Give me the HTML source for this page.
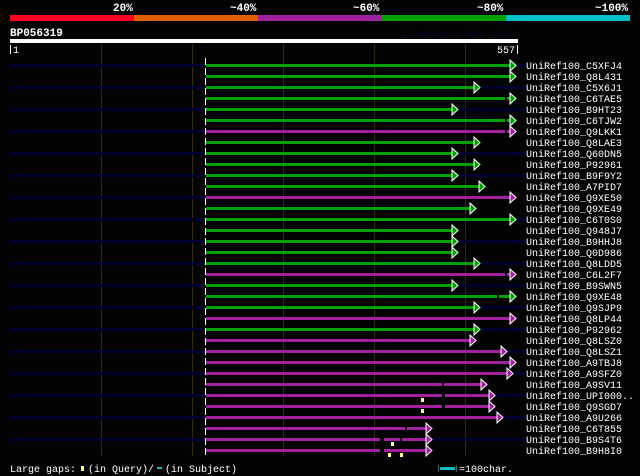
<!DOCTYPE html>
<html><head><meta charset="utf-8"><style>
html,body{margin:0;padding:0;background:#000;}
svg{display:block}
text{font-family:"Liberation Mono","DejaVu Sans Mono",monospace;}
</style></head><body>
<svg width="640" height="476" xmlns="http://www.w3.org/2000/svg">
<rect width="640" height="476" fill="#030303"/>
<g fill="#fff" font-size="11" font-weight="bold">
<text x="113" y="11">20%</text><text x="230" y="11">~40%</text><text x="353" y="11">~60%</text><text x="477" y="11">~80%</text><text x="595" y="11">~100%</text>
</g>
<rect x="10" y="15" width="124" height="6" fill="#ff0022"/>
<rect x="134" y="15" width="124" height="6" fill="#e06000"/>
<rect x="258" y="15" width="124" height="6" fill="#a020a0"/>
<rect x="382" y="15" width="124" height="6" fill="#00a000"/>
<rect x="506" y="15" width="124" height="6" fill="#00c0c8"/>
<text x="10" y="36" fill="#fff" font-size="11" font-weight="bold">BP056319</text>
<text x="402" y="37" fill="#080830" font-size="8">AlignView.pm Beta rel.7</text>
<rect x="10" y="39" width="508" height="4" fill="#fff"/>
<rect x="10" y="45" width="1" height="9" fill="#fff"/>
<text x="13" y="53" fill="#fff" font-size="10">1</text>
<text x="497" y="53" fill="#fff" font-size="10">557</text>
<rect x="517" y="45" width="1" height="9" fill="#fff"/>
<g fill="#2e2e0c">
<rect x="101" y="44" width="1" height="412"/><rect x="192" y="44" width="1" height="412"/><rect x="283" y="44" width="1" height="412"/><rect x="374" y="44" width="1" height="412"/><rect x="465" y="44" width="1" height="412"/>
</g>
<g fill="#000030">
<rect x="10" y="64" width="195" height="3"/><rect x="10" y="86" width="195" height="3"/><rect x="10" y="108" width="195" height="3"/><rect x="10" y="130" width="195" height="3"/><rect x="10" y="152" width="195" height="3"/><rect x="10" y="174" width="195" height="3"/><rect x="10" y="196" width="195" height="3"/><rect x="10" y="218" width="195" height="3"/><rect x="10" y="240" width="195" height="3"/><rect x="10" y="262" width="195" height="3"/><rect x="10" y="284" width="195" height="3"/><rect x="10" y="306" width="195" height="3"/><rect x="10" y="328" width="195" height="3"/><rect x="10" y="350" width="195" height="3"/><rect x="10" y="372" width="195" height="3"/><rect x="10" y="394" width="195" height="3"/><rect x="10" y="416" width="195" height="3"/><rect x="10" y="438" width="195" height="3"/>
<rect x="516" y="64" width="10" height="3"/><rect x="480" y="86" width="46" height="3"/><rect x="458" y="108" width="68" height="3"/><rect x="458" y="152" width="68" height="3"/><rect x="458" y="174" width="68" height="3"/><rect x="516" y="218" width="10" height="3"/><rect x="458" y="240" width="68" height="3"/><rect x="480" y="262" width="46" height="3"/><rect x="458" y="284" width="68" height="3"/><rect x="480" y="306" width="46" height="3"/><rect x="480" y="328" width="46" height="3"/><rect x="507" y="350" width="19" height="3"/><rect x="513" y="372" width="13" height="3"/><rect x="495" y="394" width="31" height="3"/><rect x="503" y="416" width="23" height="3"/><rect x="432" y="438" width="94" height="3"/>
</g>
<line x1="205.5" y1="58" x2="205.5" y2="456" stroke="#fff" stroke-width="1" stroke-dasharray="7 3"/>
<g>
<rect x="206" y="64" width="304" height="3" fill="#00a000"/>
<rect x="206" y="75" width="304" height="3" fill="#00a000"/>
<rect x="206" y="86" width="268" height="3" fill="#00a000"/>
<rect x="206" y="97" width="304" height="3" fill="#00a000"/>
<rect x="206" y="108" width="246" height="3" fill="#00a000"/>
<rect x="206" y="119" width="304" height="3" fill="#00a000"/>
<rect x="206" y="130" width="304" height="3" fill="#a020a0"/>
<rect x="206" y="141" width="268" height="3" fill="#00a000"/>
<rect x="206" y="152" width="246" height="3" fill="#00a000"/>
<rect x="206" y="163" width="268" height="3" fill="#00a000"/>
<rect x="206" y="174" width="246" height="3" fill="#00a000"/>
<rect x="206" y="185" width="273" height="3" fill="#00a000"/>
<rect x="206" y="196" width="304" height="3" fill="#a020a0"/>
<rect x="206" y="207" width="264" height="3" fill="#00a000"/>
<rect x="206" y="218" width="304" height="3" fill="#00a000"/>
<rect x="206" y="229" width="246" height="3" fill="#00a000"/>
<rect x="206" y="240" width="246" height="3" fill="#00a000"/>
<rect x="206" y="251" width="246" height="3" fill="#00a000"/>
<rect x="206" y="262" width="268" height="3" fill="#00a000"/>
<rect x="206" y="273" width="304" height="3" fill="#a020a0"/>
<rect x="206" y="284" width="246" height="3" fill="#00a000"/>
<rect x="206" y="295" width="304" height="3" fill="#00a000"/>
<rect x="206" y="306" width="268" height="3" fill="#00a000"/>
<rect x="206" y="317" width="304" height="3" fill="#a020a0"/>
<rect x="206" y="328" width="268" height="3" fill="#00a000"/>
<rect x="206" y="339" width="264" height="3" fill="#a020a0"/>
<rect x="206" y="350" width="295" height="3" fill="#a020a0"/>
<rect x="206" y="361" width="304" height="3" fill="#a020a0"/>
<rect x="206" y="372" width="301" height="3" fill="#a020a0"/>
<rect x="206" y="383" width="275" height="3" fill="#a020a0"/>
<rect x="206" y="394" width="283" height="3" fill="#a020a0"/>
<rect x="206" y="405" width="283" height="3" fill="#a020a0"/>
<rect x="206" y="416" width="291" height="3" fill="#a020a0"/>
<rect x="206" y="427" width="220" height="3" fill="#a020a0"/>
<rect x="206" y="438" width="220" height="3" fill="#a020a0"/>
<rect x="206" y="449" width="220" height="3" fill="#a020a0"/>
</g>
<g fill="#000"><rect x="442" y="383" width="2" height="3"/><rect x="442" y="394" width="3" height="3"/><rect x="442" y="405" width="3" height="3"/><rect x="405" y="427" width="2" height="3"/><rect x="380" y="438" width="4" height="3"/><rect x="400" y="438" width="2" height="3"/><rect x="380" y="449" width="4" height="3"/><rect x="505" y="97" width="2" height="3"/><rect x="505" y="119" width="2" height="3"/><rect x="505" y="130" width="2" height="3"/><rect x="505" y="273" width="2" height="3"/><rect x="497" y="295" width="2" height="3"/></g>
<g fill="#ffff80"><rect x="421" y="398" width="3" height="4"/><rect x="421" y="409" width="3" height="4"/><rect x="391" y="442" width="3" height="4"/><rect x="388" y="453" width="3" height="4"/><rect x="400" y="453" width="3" height="4"/></g>
<g stroke="#fff" stroke-width="1">
<polygon points="510,60 516,65.5 510,71" fill="#00a000"/>
<polygon points="510,71 516,76.5 510,82" fill="#00a000"/>
<polygon points="474,82 480,87.5 474,93" fill="#00a000"/>
<polygon points="510,93 516,98.5 510,104" fill="#00a000"/>
<polygon points="452,104 458,109.5 452,115" fill="#00a000"/>
<polygon points="510,115 516,120.5 510,126" fill="#00a000"/>
<polygon points="510,126 516,131.5 510,137" fill="#a020a0"/>
<polygon points="474,137 480,142.5 474,148" fill="#00a000"/>
<polygon points="452,148 458,153.5 452,159" fill="#00a000"/>
<polygon points="474,159 480,164.5 474,170" fill="#00a000"/>
<polygon points="452,170 458,175.5 452,181" fill="#00a000"/>
<polygon points="479,181 485,186.5 479,192" fill="#00a000"/>
<polygon points="510,192 516,197.5 510,203" fill="#a020a0"/>
<polygon points="470,203 476,208.5 470,214" fill="#00a000"/>
<polygon points="510,214 516,219.5 510,225" fill="#00a000"/>
<polygon points="452,225 458,230.5 452,236" fill="#00a000"/>
<polygon points="452,236 458,241.5 452,247" fill="#00a000"/>
<polygon points="452,247 458,252.5 452,258" fill="#00a000"/>
<polygon points="474,258 480,263.5 474,269" fill="#00a000"/>
<polygon points="510,269 516,274.5 510,280" fill="#a020a0"/>
<polygon points="452,280 458,285.5 452,291" fill="#00a000"/>
<polygon points="510,291 516,296.5 510,302" fill="#00a000"/>
<polygon points="474,302 480,307.5 474,313" fill="#00a000"/>
<polygon points="510,313 516,318.5 510,324" fill="#a020a0"/>
<polygon points="474,324 480,329.5 474,335" fill="#00a000"/>
<polygon points="470,335 476,340.5 470,346" fill="#a020a0"/>
<polygon points="501,346 507,351.5 501,357" fill="#a020a0"/>
<polygon points="510,357 516,362.5 510,368" fill="#a020a0"/>
<polygon points="507,368 513,373.5 507,379" fill="#a020a0"/>
<polygon points="481,379 487,384.5 481,390" fill="#a020a0"/>
<polygon points="489,390 495,395.5 489,401" fill="#a020a0"/>
<polygon points="489,401 495,406.5 489,412" fill="#a020a0"/>
<polygon points="497,412 503,417.5 497,423" fill="#a020a0"/>
<polygon points="426,423 432,428.5 426,434" fill="#a020a0"/>
<polygon points="426,434 432,439.5 426,445" fill="#a020a0"/>
<polygon points="426,445 432,450.5 426,456" fill="#a020a0"/>
</g>
<g fill="#fff" font-size="10">
<text x="526" y="69">UniRef100_C5XFJ4</text>
<text x="526" y="80">UniRef100_Q8L431</text>
<text x="526" y="91">UniRef100_C5X6J1</text>
<text x="526" y="102">UniRef100_C6TAE5</text>
<text x="526" y="113">UniRef100_B9HT23</text>
<text x="526" y="124">UniRef100_C6TJW2</text>
<text x="526" y="135">UniRef100_Q9LKK1</text>
<text x="526" y="146">UniRef100_Q8LAE3</text>
<text x="526" y="157">UniRef100_Q60DN5</text>
<text x="526" y="168">UniRef100_P92961</text>
<text x="526" y="179">UniRef100_B9F9Y2</text>
<text x="526" y="190">UniRef100_A7PID7</text>
<text x="526" y="201">UniRef100_Q9XE50</text>
<text x="526" y="212">UniRef100_Q9XE49</text>
<text x="526" y="223">UniRef100_C6T0S0</text>
<text x="526" y="234">UniRef100_Q948J7</text>
<text x="526" y="245">UniRef100_B9HHJ8</text>
<text x="526" y="256">UniRef100_Q0D986</text>
<text x="526" y="267">UniRef100_Q8LDD5</text>
<text x="526" y="278">UniRef100_C6L2F7</text>
<text x="526" y="289">UniRef100_B9SWN5</text>
<text x="526" y="300">UniRef100_Q9XE48</text>
<text x="526" y="311">UniRef100_Q9SJP9</text>
<text x="526" y="322">UniRef100_Q8LP44</text>
<text x="526" y="333">UniRef100_P92962</text>
<text x="526" y="344">UniRef100_Q8LSZ0</text>
<text x="526" y="355">UniRef100_Q8LSZ1</text>
<text x="526" y="366">UniRef100_A9TBJ8</text>
<text x="526" y="377">UniRef100_A9SFZ0</text>
<text x="526" y="388">UniRef100_A9SV11</text>
<text x="526" y="399">UniRef100_UPI000..</text>
<text x="526" y="410">UniRef100_Q9SGD7</text>
<text x="526" y="421">UniRef100_A9U266</text>
<text x="526" y="432">UniRef100_C6T855</text>
<text x="526" y="443">UniRef100_B9S4T6</text>
<text x="526" y="454">UniRef100_B9H8I0</text>
</g>
<g fill="#fff" font-size="10">
<text x="10" y="472">Large gaps:</text>
<text x="88" y="472">(in Query)/</text>
<text x="165" y="472">(in Subject)</text>
<text x="459" y="472">=100char.</text>
</g>
<rect x="81" y="466" width="3" height="5" fill="#ffff80"/>
<rect x="157" y="467" width="5" height="2" fill="#00c0c8"/>
<rect x="438" y="465" width="1" height="7" fill="#555"/>
<rect x="440" y="467" width="15" height="3" fill="#00c0c8"/>
<rect x="456" y="465" width="1" height="7" fill="#555"/>
</svg>
</body></html>
